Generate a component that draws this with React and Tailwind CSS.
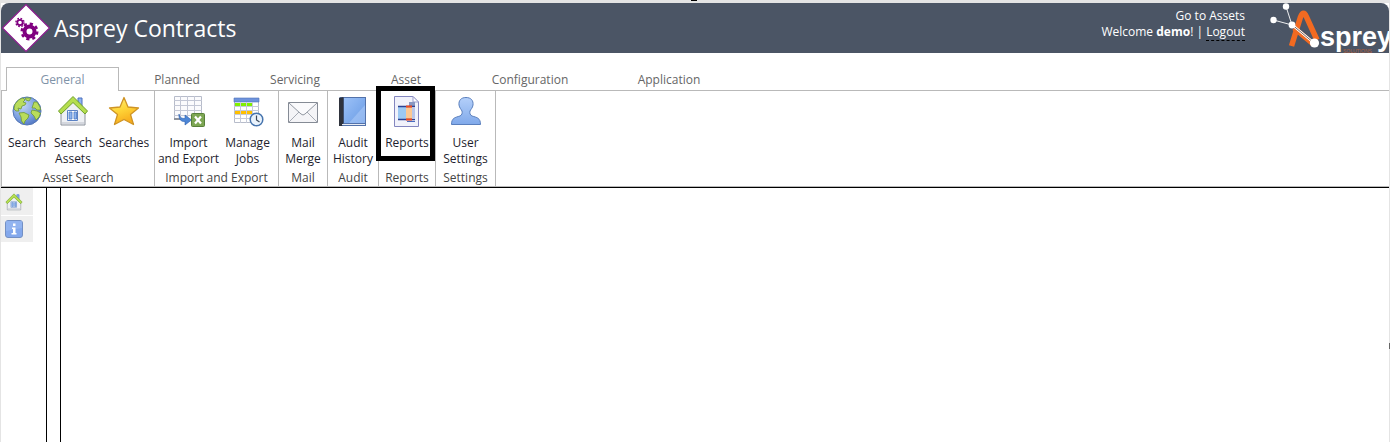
import React from 'react';

const GlobeIcon = () => (
  <svg viewBox="0 0 32 32" className="size-8" aria-hidden="true">
    <defs>
      <radialGradient id="sea" cx="0.35" cy="0.3" r="0.8">
        <stop offset="0" stopColor="#c3d6f6" />
        <stop offset="0.6" stopColor="#7a9fe0" />
        <stop offset="1" stopColor="#4a6fbd" />
      </radialGradient>
    </defs>
    <circle cx="16" cy="16" r="14" fill="url(#sea)" stroke="#5577b5" />
    <g fill="#b9dc5c" stroke="#6f9a35" strokeWidth="0.8">
      <path d="M3 14 L4 9 L8 4.500 L12 3 L14 5 L12 7 L15 8 L14 10 L11 11 L10 14 L7 13 L8 16 L5 16 Z" />
      <path d="M14 3 L20 3 L18 6 L15 5 Z" />
      <path d="M8 18 L13 17.500 L18 20 L17 23 L14 26 L13 29 L10.500 26 L10 22 Z" />
      <path d="M23 7 L26 7 L29 12 L29.500 15 L26 15 L24 13 L21 13 L22 10 Z" />
      <path d="M21 15 L26 16 L29.500 18 L28 22 L25 25 L23 21 L20 18 Z" />
    </g>
  </svg>
);

const HomeIcon = ({ className = 'size-8' }) => (
  <svg viewBox="0 0 32 32" className={className} aria-hidden="true">
    <path d="M21 3 H25 V13 H21 Z" fill="#8fb4f2" stroke="#4a6fbd" />
    <path d="M4 17 L16 6 L28 17 V30 H4 Z" fill="#eef0f4" stroke="#8c929c" />
    <path d="M5 27 H27 V29 H5 Z" fill="#d4d7de" />
    <path d="M10.500 15.500 H20.500 V25.500 H10.500 Z" fill="#fff" stroke="#5b82c4" />
    <path d="M12 17 H15 V24 H12 Z M17 17 H19.500 V24 H17 Z" fill="#8cb3ee" stroke="#4a78c4" strokeWidth="0.8" />
    <path
      d="M1.500 16 L16 1.500 L30.500 16 L28 19 L16 7.500 L4 19 Z"
      fill="#b5de4e"
      stroke="#6f9f2c"
      strokeLinejoin="round"
    />
  </svg>
);

const StarIcon = () => (
  <svg viewBox="0 0 32 32" className="size-8" aria-hidden="true">
    <defs>
      <linearGradient id="gold" x1="0" y1="0" x2="0.4" y2="1">
        <stop offset="0" stopColor="#ffee88" />
        <stop offset="0.5" stopColor="#ffd83a" />
        <stop offset="1" stopColor="#f8ac1c" />
      </linearGradient>
    </defs>
    <path
      d="M16 2.500 L20 12 L30.500 13 L22.500 19.500 L25.500 29.500 L16 24.500 L6.500 29.500 L9.500 19.500 L1.500 13 L12 12 Z"
      fill="url(#gold)"
      stroke="#cf9425"
      strokeWidth="1.300"
      strokeLinejoin="round"
    />
  </svg>
);

const ImportIcon = () => (
  <svg viewBox="0 0 32 32" className="size-8" aria-hidden="true">
    <path d="M1.500 1.500 H28.500 V24.500 H1.500 Z" fill="#fbfbfd" stroke="#b7bcca" />
    <path
      d="M7.500 1 V25 M14.500 1 V25 M21.500 1 V25 M1 5.500 H29 M1 10.500 H29 M1 15.500 H29 M1 20.500 H29"
      stroke="#c3c7d5"
    />
    <path d="M1 23 H9 V25 H1 Z" fill="#8e939d" />
    <path
      d="M6 19 C7 23 9 23.500 12 23.500 V20 L18.500 25 L12 30 V26.500 C8 27 5.500 24 6 19 Z"
      fill="#4d86d6"
      stroke="#2c5fae"
      strokeWidth="0.600"
    />
    <rect x="18.500" y="18.500" width="13" height="13" rx="1" fill="#7da653" stroke="#58803a" />
    <path d="M22 21.500 L28 28.500 M28 21.500 L22 28.500" stroke="#fff" strokeWidth="2.200" />
  </svg>
);

const JobsIcon = () => (
  <svg viewBox="0 0 32 32" className="size-8" aria-hidden="true">
    <path d="M2.500 3.500 H26.500 V27.500 H2.500 Z" fill="#fff" stroke="#b7bcca" />
    <path d="M2 3 H27 V7 H2 Z" fill="#6e93dc" stroke="#4f72ba" strokeWidth="0.600" />
    <path d="M8.500 7 V28 M14.500 7 V28 M20.500 7 V28 M2 11.500 H27 M2 15.500 H27 M2 19.500 H27 M2 23.500 H27" stroke="#c6cbd8" />
    <path d="M3 8 H8 V11 H3 Z M9 8 H14 V11 H9 Z M15 8 H20 V11 H15 Z" fill="#80f000" />
    <path d="M3 16 H8 V19 H3 Z M9 16 H14 V19 H9 Z M15 16 H20 V19 H15 Z" fill="#ffc000" />
    <circle cx="24.500" cy="24.500" r="6.300" fill="#eaf3fc" stroke="#4674ad" strokeWidth="1.500" />
    <path d="M24.500 20.500 V25 L27.500 27" fill="none" stroke="#3c4a5c" strokeWidth="1.200" />
  </svg>
);

const MailIcon = () => (
  <svg viewBox="0 0 32 32" className="size-8" aria-hidden="true">
    <path d="M1.500 7.500 H30.500 V27.500 H1.500 Z" fill="#f4f4f7" stroke="#858b95" />
    <path d="M2 27 L12 17 M30 27 L20 17" stroke="#a7acb5" />
    <path d="M2 8 L14 19 Q16 21 18 19 L30 8" fill="#fafafc" stroke="#9097a1" />
  </svg>
);

const BookIcon = () => (
  <svg viewBox="0 0 32 32" className="size-8" aria-hidden="true">
    <defs>
      <linearGradient id="cover" x1="0" y1="0" x2="1" y2="1">
        <stop offset="0" stopColor="#9cc1f7" />
        <stop offset="0.500" stopColor="#82aeee" />
        <stop offset="1" stopColor="#6c9ce4" />
      </linearGradient>
    </defs>
    <path d="M3 2 H29 V31 H2 V3 Z" fill="#5372aa" />
    <path d="M7 3 H28 V28 H7 Z" fill="url(#cover)" />
    <path d="M28 10 V28 H12 Z" fill="#b4d0f9" opacity="0.500" />
    <path d="M2 3 L6.500 2 V28 L5 31 H2 Z" fill="#2f333d" />
    <path d="M5 29.500 H28" stroke="#e9edf5" />
  </svg>
);

const ReportIcon = () => (
  <svg viewBox="0 0 32 32" className="size-8" aria-hidden="true">
    <path d="M3.500 1.500 H22 L27.500 7 V31.500 H3.500 Z" fill="#f1f2fb" stroke="#8386bf" />
    <path d="M22 1.500 V7 H27.500 Z" fill="#fff" stroke="#9a9dcc" />
    <path d="M18 7 H24 V11 H18 Z" fill="#8997c2" />
    <path d="M7 11 H15 V24 H7 Z" fill="#9cc9f3" />
    <path d="M15 11 H21 V24 H15 Z" fill="#fbc893" />
    <path d="M21 13 H24 V23 H21 Z" fill="#b9c6ea" />
    <path d="M7 11.500 H24 M7 24.500 H24" stroke="#2c4192" strokeWidth="1.600" />
    <path d="M15 11.500 H21 M15 24.500 H21" stroke="#f04a20" strokeWidth="1.800" />
    <path d="M16 26.500 H24" stroke="#4a6cc0" />
  </svg>
);

const UserIcon = () => (
  <svg viewBox="0 0 32 32" className="size-8" aria-hidden="true">
    <defs>
      <linearGradient id="person" x1="0" y1="0" x2="0" y2="1">
        <stop offset="0" stopColor="#b4d0fa" />
        <stop offset="1" stopColor="#80a9ea" />
      </linearGradient>
    </defs>
    <path
      d="M16 2.500 C21 2.500 23.500 5.500 23 10 C22.500 13 21 14 20 16 C19.500 18 20 20 22 21 C27 22.500 30.500 23 30.500 29.500 H1.500 C1.500 23 5 22.500 10 21 C12 20 12.500 18 12 16 C11 14 9.500 13 9 10 C8.500 5.500 11 2.500 16 2.500 Z"
      fill="url(#person)"
      stroke="#5a7fbd"
    />
  </svg>
);

const InfoIcon = () => (
  <svg viewBox="0 0 18 18" className="size-[18px]" aria-hidden="true">
    <rect x="0.500" y="0.500" width="17" height="17" rx="2.500" fill="#83a8ec" stroke="#7390c4" />
    <path d="M1 1 H17 V8 L1 11 Z" fill="#9dbcf3" opacity="0.600" />
    <path d="M8 3.500 H10.500 V6 H8 Z M7 7.500 H10.500 V13 H11.500 V14.500 H6.500 V13 H8 V9 H7 Z" fill="#fff" />
  </svg>
);

const ContractsLogo = () => (
  <svg viewBox="0 0 50 50" className="size-[50px]" aria-hidden="true">
    <path d="M25 1.500 L48.500 25 L25 48.500 L1.500 25 Z" fill="#fff" stroke="#8a1a8c" strokeWidth="1.200" />
    <g fill="none" stroke="#800080">
      <circle cx="28.500" cy="28.500" r="5" strokeWidth="4" />
      <circle cx="28.500" cy="28.500" r="7.800" strokeWidth="2.400" strokeDasharray="3.200 2.926" />
      <circle cx="19" cy="19.500" r="2.700" strokeWidth="1.800" />
      <circle cx="19" cy="19.500" r="4.100" strokeWidth="1.400" strokeDasharray="1.700 1.520" />
    </g>
  </svg>
);

const AspreyLogo = () => (
  <svg viewBox="0 0 122 50" className="h-[50px] w-[122px]" role="img" aria-label="Asprey Solutions">
    <path d="M24.500 43 L33.500 14 Q36.500 6.500 39.500 14 L50 37" fill="none" stroke="#f26a21" strokeWidth="5.500" />
    <path d="M27 25 L46 41" stroke="#f26a21" strokeWidth="5" />
    <path d="M6.500 17 L25 22 L19 3.500" fill="none" stroke="#fff" strokeWidth="0.900" />
    <path d="M26 22.500 L47 40" stroke="#fff" strokeWidth="2.400" />
    <path d="M26 22.500 L47 40" stroke="#67554f" strokeWidth="0.900" />
    <circle cx="6.500" cy="17" r="3.200" fill="#fff" />
    <circle cx="19" cy="3.500" r="3.200" fill="#fff" />
    <circle cx="25" cy="22" r="3.400" fill="#fff" />
    <circle cx="47.500" cy="40" r="4.600" fill="#fff" />
    <text x="53" y="43" fill="#fff" fontSize="27" fontWeight="700" fontFamily="'Liberation Sans', sans-serif">
      sprey
    </text>
    <text x="76" y="50" fill="#b5603a" fontSize="5" fontFamily="'Liberation Sans', sans-serif">
      SOLUTIONS
    </text>
  </svg>
);

const tabs = [
  { name: 'Planned', width: 'w-[116px]' },
  { name: 'Servicing', width: 'w-[120px]' },
  { name: 'Asset', width: 'w-[102px]' },
  { name: 'Configuration', width: 'w-[146px]' },
  { name: 'Application', width: 'w-[132px]' },
];

const groups = [
  {
    name: 'Asset Search',
    width: 'w-[153px]',
    items: [
      { lines: ['Search'], icon: GlobeIcon, width: 'w-[46px]' },
      { lines: ['Search', 'Assets'], icon: HomeIcon, width: 'w-[46px]' },
      { lines: ['Searches'], icon: StarIcon, width: 'w-[56px]' },
    ],
  },
  {
    name: 'Import and Export',
    width: 'w-[124px]',
    items: [
      { lines: ['Import', 'and Export'], icon: ImportIcon, width: 'w-[62px]' },
      { lines: ['Manage', 'Jobs'], icon: JobsIcon, width: 'w-[56px]' },
    ],
  },
  { name: 'Mail', width: 'w-[49px]', items: [{ lines: ['Mail', 'Merge'], icon: MailIcon, width: 'w-12' }] },
  { name: 'Audit', width: 'w-[51px]', items: [{ lines: ['Audit', 'History'], icon: BookIcon, width: 'w-12' }] },
  {
    name: 'Reports',
    width: 'w-[57px]',
    items: [{ lines: ['Reports'], icon: ReportIcon, width: 'w-[54px]', marked: true }],
  },
  { name: 'Settings', width: 'w-[60px]', items: [{ lines: ['User', 'Settings'], icon: UserIcon, width: 'w-14' }] },
];

const Header = () => (
  <header className="flex h-[50px] items-center justify-between overflow-hidden rounded-t-lg bg-[#4b5565] text-white">
    <div className="flex items-center gap-[3px]">
      <ContractsLogo />
      <h1 className="text-[23px]">Asprey Contracts</h1>
    </div>
    <div className="flex items-center gap-[22px]">
      <div className="pb-2 text-right text-xs leading-4">
        <a href="#assets" className="block">
          Go to Assets
        </a>
        <p>
          Welcome <b>demo</b>! |{' '}
          <a href="#logout" className="border-b border-dashed border-black">
            Logout
          </a>
        </p>
      </div>
      <AspreyLogo />
    </div>
  </header>
);

const RibbonItem = ({ item }) => {
  const Icon = item.icon;
  return (
    <button className={`relative flex flex-col items-center whitespace-nowrap ${item.width}`}>
      <Icon />
      <span className="mt-2 leading-4">
        {item.lines.map((line) => (
          <span key={line} className="block">
            {line}
          </span>
        ))}
      </span>
      {item.marked && <span className="absolute -top-[9px] -left-1 h-[75px] w-[59px] border-5 border-black" />}
    </button>
  );
};

const Ribbon = () => (
  <nav className="text-xs">
    <div className="mt-[14px] flex h-6 items-end border-b border-[#b9b9b9] pl-[5px] text-[#666]">
      <button className="-mb-px h-6 w-[113px] border border-b-0 border-[#b9b9b9] bg-white text-[#7f93a8]">
        General
      </button>
      {tabs.map((tab) => (
        <button key={tab.name} className={`h-6 pt-1 ${tab.width}`}>
          {tab.name}
        </button>
      ))}
    </div>
    <div className="flex h-24 border-b border-[#b9b9b9] border-l text-[#1e1e2e]">
      {groups.map((group) => (
        <section
          key={group.name}
          className={`flex flex-col items-center justify-between border-r border-[#b9b9b9] pt-1 ${group.width}`}
        >
          <div className="flex items-start">
            {group.items.map((item) => (
              <RibbonItem key={item.lines.join(' ')} item={item} />
            ))}
          </div>
          <h2 className="whitespace-nowrap leading-4 text-[#444]">{group.name}</h2>
        </section>
      ))}
    </div>
  </nav>
);

export default function App() {
  return (
    <div className="relative flex min-h-screen flex-col border-x border-t-3 border-[#e4e4e4] bg-white font-['Open_Sans','Noto_Sans',sans-serif]">
      <span className="absolute -top-[3px] left-1/2 -ml-1 h-px w-1.5 bg-black" />
      <span className="absolute -right-px top-[340px] h-[6px] w-px bg-[#666]" />
      <Header />
      <Ribbon />
      <main className="flex grow border-t border-black">
        <aside className="flex w-8 flex-col gap-px">
          <button aria-label="Home" className="flex h-[27px] w-8 items-center bg-[#efefef] pl-1">
            <HomeIcon className="size-[18px]" />
          </button>
          <button aria-label="Information" className="flex h-[26px] w-8 items-center bg-[#efefef] pl-1">
            <InfoIcon />
          </button>
        </aside>
        <div className="ml-[13px] w-[15px] border-x border-black" />
        <div className="grow" />
      </main>
    </div>
  );
}
